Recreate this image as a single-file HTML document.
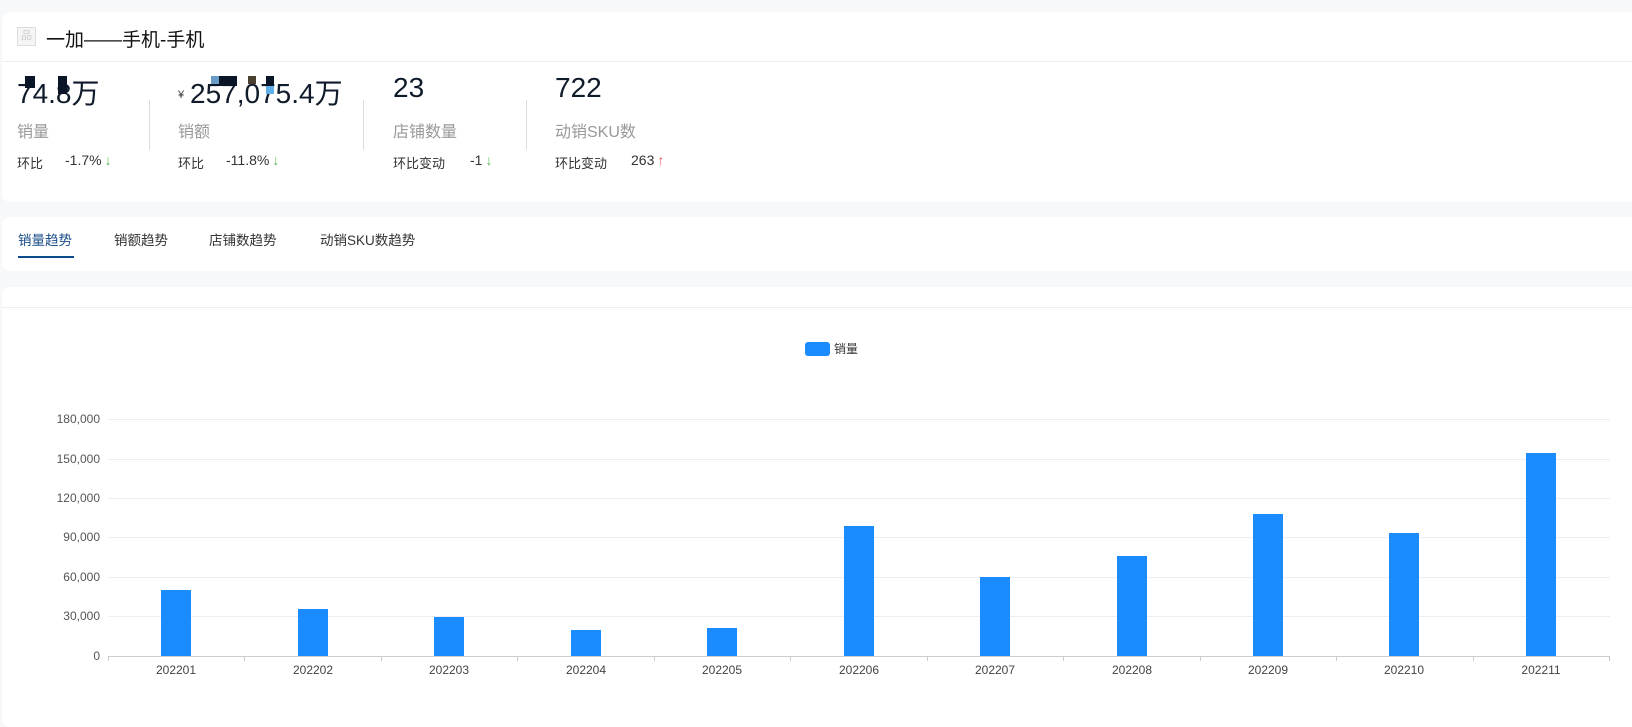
<!DOCTYPE html>
<html><head><meta charset="utf-8"><style>
*{margin:0;padding:0;box-sizing:border-box}
body{width:1632px;height:707px;background:#f7f8fa;font-family:"Liberation Sans","Noto Sans CJK SC",sans-serif;position:relative;overflow:hidden;color:#222}
.card{position:absolute;left:2px;right:-10px;background:#fff;border-radius:8px}
.a{position:absolute;white-space:nowrap}
.num{font-size:28px;color:#0f1a2a;top:72px}
.lab{font-size:16px;color:#999;top:118px}
.hb{font-size:13px;color:#333;top:153px}
.hv{font-size:14px;color:#333;top:152px}
.dn{color:#5cb85c;margin-left:3px;font-weight:300}
.up{color:#e8545d;margin-left:3px;font-weight:300}
.div{position:absolute;top:100px;width:1px;height:50px;background:#ddd}
.tab{font-size:13.5px;color:#333;top:229px}
</style></head><body>
<div class="card" style="top:12px;height:190px"></div>
<div class="a" style="left:2px;right:0;top:61px;height:1px;background:#eceef1"></div>
<div class="a" style="left:17px;top:27px;width:19px;height:19px;border:1px solid #ddd;background:#f5f5f5;color:#ccc;font-size:11px;text-align:center;line-height:17px">品</div>
<div class="a" style="left:46px;top:25px;font-size:19px;color:#111">一加——手机-手机</div>

<div class="a num" style="left:17px">74.8万</div>
<div class="a" style="left:25px;top:76px;width:10px;height:12px;background:#0a1628"></div>
<div class="a" style="left:58px;top:76px;width:9px;height:18px;background:#0a1628"></div>
<div class="a lab" style="left:17px">销量</div>
<div class="a hb" style="left:17px">环比</div>
<div class="a hv" style="left:65px">-1.7%<span class="dn">↓</span></div>
<div class="div" style="left:149px"></div>

<div class="a" style="left:178px;top:89px;font-size:11px;color:#333">¥</div>
<div class="a num" style="left:190px">257,075.4万</div>
<div class="a" style="left:211px;top:76px;width:26px;height:10px;background:#0a1628"></div>
<div class="a" style="left:211px;top:76px;width:8px;height:8px;background:#6a9cc8"></div>
<div class="a" style="left:248px;top:76px;width:8px;height:8px;background:#4a4030"></div>
<div class="a" style="left:266px;top:76px;width:8px;height:10px;background:#0a1628"></div>
<div class="a" style="left:266px;top:86px;width:8px;height:8px;background:#5fb0e8"></div>
<div class="a lab" style="left:178px">销额</div>
<div class="a hb" style="left:178px">环比</div>
<div class="a hv" style="left:226px">-11.8%<span class="dn">↓</span></div>
<div class="div" style="left:363px"></div>

<div class="a num" style="left:393px">23</div>
<div class="a lab" style="left:393px">店铺数量</div>
<div class="a hb" style="left:393px">环比变动</div>
<div class="a hv" style="left:470px">-1<span class="dn">↓</span></div>
<div class="div" style="left:526px"></div>

<div class="a num" style="left:555px">722</div>
<div class="a lab" style="left:555px">动销SKU数</div>
<div class="a hb" style="left:555px">环比变动</div>
<div class="a hv" style="left:631px">263<span class="up">↑</span></div>

<div class="card" style="top:217px;height:54px"></div>
<div class="a tab" style="left:18px;color:#1a4e8a">销量趋势</div>
<div class="a" style="left:18px;top:256px;width:56px;height:2px;background:#0d4c8c"></div>
<div class="a tab" style="left:114px">销额趋势</div>
<div class="a tab" style="left:209px">店铺数趋势</div>
<div class="a tab" style="left:320px">动销SKU数趋势</div>

<div class="card" style="top:287px;height:440px"></div>
<div class="a" style="left:2px;right:0;top:307px;height:1px;background:#eceef1"></div>

<svg class="a" style="left:0;top:0" width="1632" height="707" font-family="Liberation Sans, Noto Sans CJK SC, sans-serif">
<rect x="805" y="342" width="25" height="14" rx="3" fill="#1a8cff"/>
<text x="834" y="353" font-size="12" fill="#333">销量</text>
<g stroke="#eceef1" stroke-width="1">
<line x1="108" x2="1610" y1="419.5" y2="419.5"/><line x1="108" x2="1610" y1="459.5" y2="459.5"/><line x1="108" x2="1610" y1="498.5" y2="498.5"/><line x1="108" x2="1610" y1="537.5" y2="537.5"/><line x1="108" x2="1610" y1="577.5" y2="577.5"/><line x1="108" x2="1610" y1="616.5" y2="616.5"/>
</g>
<g font-size="12" fill="#555" text-anchor="end">
<text x="100" y="423">180,000</text><text x="100" y="463">150,000</text><text x="100" y="502">120,000</text><text x="100" y="541">90,000</text><text x="100" y="581">60,000</text><text x="100" y="620">30,000</text><text x="100" y="660">0</text>
</g>
<g fill="#1a8cff">
<rect x="161" y="590" width="30" height="66"/>
<rect x="298" y="609" width="30" height="47"/>
<rect x="434" y="617" width="30" height="39"/>
<rect x="571" y="630" width="30" height="26"/>
<rect x="707" y="628" width="30" height="28"/>
<rect x="844" y="526" width="30" height="130"/>
<rect x="980" y="577" width="30" height="79"/>
<rect x="1117" y="556" width="30" height="100"/>
<rect x="1253" y="514" width="30" height="142"/>
<rect x="1389" y="533" width="30" height="123"/>
<rect x="1526" y="453" width="30" height="203"/>
</g>
<line x1="108" x2="1610" y1="656.5" y2="656.5" stroke="#ccc"/>
<g stroke="#ccc">
<line x1="108.5" x2="108.5" y1="656" y2="661"/><line x1="244.5" x2="244.5" y1="656" y2="661"/><line x1="381.5" x2="381.5" y1="656" y2="661"/><line x1="517.5" x2="517.5" y1="656" y2="661"/><line x1="654.5" x2="654.5" y1="656" y2="661"/><line x1="790.5" x2="790.5" y1="656" y2="661"/><line x1="927.5" x2="927.5" y1="656" y2="661"/><line x1="1063.5" x2="1063.5" y1="656" y2="661"/><line x1="1200.5" x2="1200.5" y1="656" y2="661"/><line x1="1336.5" x2="1336.5" y1="656" y2="661"/><line x1="1473.5" x2="1473.5" y1="656" y2="661"/><line x1="1609.5" x2="1609.5" y1="656" y2="661"/>
</g>
<g font-size="12" fill="#444" text-anchor="middle">
<text x="176" y="674">202201</text><text x="313" y="674">202202</text><text x="449" y="674">202203</text><text x="586" y="674">202204</text><text x="722" y="674">202205</text><text x="859" y="674">202206</text><text x="995" y="674">202207</text><text x="1132" y="674">202208</text><text x="1268" y="674">202209</text><text x="1404" y="674">202210</text><text x="1541" y="674">202211</text>
</g>
</svg>
</body></html>
